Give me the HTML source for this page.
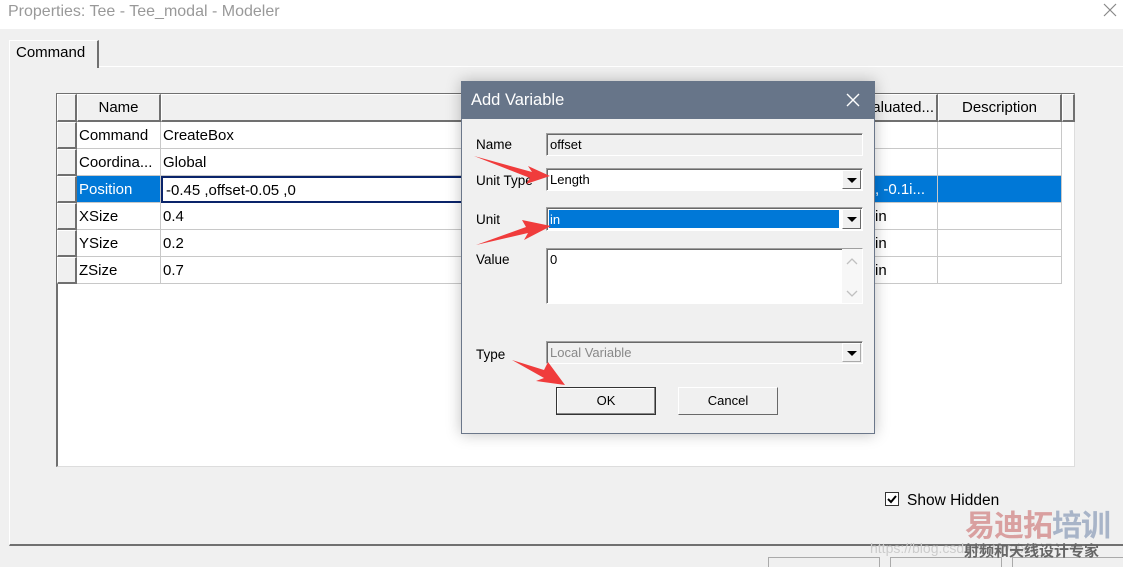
<!DOCTYPE html>
<html><head><meta charset="utf-8"><style>
*{box-sizing:border-box;margin:0;padding:0}
body{width:1123px;height:565px;overflow:hidden;background:#f0f0f0;font-family:"Liberation Sans","Noto Sans CJK SC",sans-serif;position:relative}
.a{position:absolute}
.t{font-size:15px;color:#000;white-space:nowrap}
.cell{position:absolute;border-right:1px solid #c8c8c8;border-bottom:1px solid #c8c8c8;background:#fff;font-size:15px;padding-left:2px;line-height:28px;white-space:nowrap;overflow:hidden}
.rh{position:absolute;background:#f0f0f0;border-right:2px solid #707070;border-bottom:2px solid #707070;border-left:1px solid #fff;border-top:1px solid #fff}
.hd{position:absolute;background:#f0f0f0;border-right:2px solid #707070;border-bottom:2px solid #707070;border-top:1px solid #fff;border-left:1px solid #fff;font-size:15px;text-align:center;line-height:26px}
.lb{position:absolute;font-size:13.5px;color:#000;font-family:"Liberation Sans",sans-serif}
.fld{position:absolute;border:1px solid;border-color:#a0a0a0 #fff #fff #a0a0a0;box-shadow:inset 1px 1px 0 #696969;font-size:13px;padding-left:3px;line-height:21px}
.dd{position:absolute;right:1px;top:1px;width:19px;bottom:1px;background:#f0f0f0;border-right:1px solid #696969;border-bottom:1px solid #696969;border-top:1px solid #fff;border-left:1px solid #fff}
.dd:after{content:"";position:absolute;left:4px;top:7px;border-left:5px solid transparent;border-right:5px solid transparent;border-top:5px solid #000}
.btn{position:absolute;background:#f0f0f0;border:1px solid;border-color:#fff #696969 #696969 #fff;font-size:13px;text-align:center;line-height:26px}
</style></head><body>
<div class="a" style="left:0;top:0;width:1123px;height:29px;background:#fff"></div>
<div class="a t" style="left:8px;top:3px;font-size:16px;color:#999">Properties: Tee - Tee_modal - Modeler</div>
<svg class="a" style="left:1103px;top:3px" width="14" height="14"><path d="M1 1L13 13M13 1L1 13" stroke="#888" stroke-width="1.2"/></svg>
<div class="a" style="left:9px;top:66px;width:1120px;height:480px;border-left:1px solid #fff;border-top:1px solid #fff;border-bottom:2px solid #707070"></div>
<div class="a" style="left:9px;top:40px;width:90px;height:28px;background:#f0f0f0;border-left:1px solid #fff;border-top:1px solid #fff;border-right:2px solid #707070"></div>
<div class="a t" style="left:16px;top:44px">Command</div>
<div class="a" style="left:56px;top:93px;width:1019px;height:374px;background:#fff;border-left:2px solid #707070;border-top:2px solid #707070;border-bottom:1px solid #ddd;border-right:1px solid #ddd"></div>
<div class="hd" style="left:57px;top:94px;width:20px;height:28px"></div>
<div class="hd" style="left:77px;top:94px;width:84px;height:28px">Name</div>
<div class="hd" style="left:161px;top:94px;width:700px;height:28px"></div>
<div class="hd" style="left:861px;top:94px;width:77px;height:28px;text-align:right;padding-right:2px">aluated...</div>
<div class="hd" style="left:938px;top:94px;width:124px;height:28px">Description</div>
<div class="hd" style="left:1062px;top:94px;width:13px;height:28px"></div>
<div class="rh" style="left:57px;top:122px;width:20px;height:27px"></div>
<div class="rh" style="left:57px;top:149px;width:20px;height:27px"></div>
<div class="rh" style="left:57px;top:176px;width:20px;height:27px"></div>
<div class="rh" style="left:57px;top:203px;width:20px;height:27px"></div>
<div class="rh" style="left:57px;top:230px;width:20px;height:27px"></div>
<div class="rh" style="left:57px;top:257px;width:20px;height:27px"></div>

<div class="cell" style="left:77px;top:122px;width:84px;height:27px">Command</div>
<div class="cell" style="left:161px;top:122px;width:700px;height:27px">CreateBox</div>
<div class="cell" style="left:861px;top:122px;width:77px;height:27px"></div>
<div class="cell" style="left:938px;top:122px;width:124px;height:27px"></div>
<div class="cell" style="left:77px;top:149px;width:84px;height:27px">Coordina...</div>
<div class="cell" style="left:161px;top:149px;width:700px;height:27px">Global</div>
<div class="cell" style="left:861px;top:149px;width:77px;height:27px"></div>
<div class="cell" style="left:938px;top:149px;width:124px;height:27px"></div>
<div class="cell" style="left:77px;top:176px;width:84px;height:27px;background:#0078d7;color:#fff">Position</div>
<div class="cell" style="left:161px;top:176px;width:700px;height:27px;border:2px solid #0a246a;line-height:25px;padding-left:3px">-0.45 ,offset-0.05 ,0</div>
<div class="cell" style="left:861px;top:176px;width:77px;height:27px;background:#0078d7;color:#fff;padding-left:14px">, -0.1i...</div>
<div class="cell" style="left:938px;top:176px;width:124px;height:27px;background:#0078d7"></div>
<div class="cell" style="left:77px;top:203px;width:84px;height:27px">XSize</div>
<div class="cell" style="left:161px;top:203px;width:700px;height:27px">0.4</div>
<div class="cell" style="left:861px;top:203px;width:77px;height:27px;padding-left:14px">in</div>
<div class="cell" style="left:938px;top:203px;width:124px;height:27px"></div>
<div class="cell" style="left:77px;top:230px;width:84px;height:27px">YSize</div>
<div class="cell" style="left:161px;top:230px;width:700px;height:27px">0.2</div>
<div class="cell" style="left:861px;top:230px;width:77px;height:27px;padding-left:14px">in</div>
<div class="cell" style="left:938px;top:230px;width:124px;height:27px"></div>
<div class="cell" style="left:77px;top:257px;width:84px;height:27px">ZSize</div>
<div class="cell" style="left:161px;top:257px;width:700px;height:27px">0.7</div>
<div class="cell" style="left:861px;top:257px;width:77px;height:27px;padding-left:14px">in</div>
<div class="cell" style="left:938px;top:257px;width:124px;height:27px"></div>

<div class="a" style="left:885px;top:492px;width:14px;height:14px;background:#fff;border:1px solid #333"></div>
<svg class="a" style="left:886px;top:493px" width="12" height="12"><path d="M2 6L5 9L10 3" stroke="#000" stroke-width="2" fill="none"/></svg>
<div class="a t" style="left:907px;top:492px;font-size:15.5px">Show Hidden</div>
<div class="a" style="left:768px;top:557px;width:112px;height:10px;border:1px solid #aaa;border-bottom:none;background:#f0f0f0"></div>
<div class="a" style="left:890px;top:557px;width:112px;height:10px;border:1px solid #aaa;border-bottom:none;background:#f0f0f0"></div>
<div class="a" style="left:1012px;top:557px;width:112px;height:10px;border:1px solid #aaa;border-bottom:none;background:#f0f0f0"></div>
<div class="a" style="left:965px;top:505px;font-size:30px;font-weight:bold;color:#d9a0a0;font-family:'Noto Sans CJK SC',sans-serif;line-height:36px;letter-spacing:-1px">易迪拓<span style="color:#a8b4c8">培训</span></div>
<div class="a" style="left:870px;top:540px;font-size:14px;color:#ccc">https://blog.csdn.net/weixin_</div>
<div class="a" style="left:964px;top:540px;font-size:15px;font-weight:bold;color:#666;font-family:'Noto Sans CJK SC',sans-serif">射频和天线设计专家</div>

<div class="a" style="left:461px;top:81px;width:414px;height:353px;background:#f0f0f0;border:1px solid #6b778a;box-shadow:0 0 14px rgba(0,0,0,.25)"></div>
<div class="a" style="left:461px;top:81px;width:414px;height:38px;background:#677589"></div>
<div class="a" style="left:471px;top:91px;font-size:16.5px;color:#fff">Add Variable</div>
<svg class="a" style="left:846px;top:93px" width="14" height="14"><path d="M1 1L13 13M13 1L1 13" stroke="#fff" stroke-width="1.4"/></svg>
<div class="lb" style="left:476px;top:137px">Name</div>
<div class="lb" style="left:476px;top:173px">Unit Type</div>
<div class="lb" style="left:476px;top:212px">Unit</div>
<div class="lb" style="left:476px;top:252px">Value</div>
<div class="lb" style="left:476px;top:347px">Type</div>
<div class="fld" style="left:546px;top:133px;width:317px;height:23px;background:#f0f0f0">offset</div>
<div class="fld" style="left:546px;top:168px;width:317px;height:23px;background:#fff">Length<div class="dd"></div></div>
<div class="fld" style="left:546px;top:207px;width:317px;height:24px;background:#fff"><div class="a" style="left:2px;top:2px;right:23px;bottom:2px;background:#0078d7;color:#fff;line-height:19px;padding-left:1px">in</div><div class="dd"></div></div>
<div class="fld" style="left:546px;top:248px;width:317px;height:56px;background:#fff;line-height:22px">0<div class="a" style="right:0;top:0;width:20px;bottom:0;background:#f7f7f7"></div>
<svg class="a" style="right:4px;top:8px" width="12" height="40"><path d="M1 7L6 2L11 7M1 34L6 39L11 34" stroke="#c0c0c0" fill="none" stroke-width="1.3"/></svg></div>
<div class="fld" style="left:546px;top:341px;width:317px;height:23px;background:#f0f0f0;color:#888">Local Variable<div class="dd" style="border-color:#fff #aaa #aaa #fff"></div></div>
<div class="btn" style="left:556px;top:387px;width:100px;height:28px;border:1px solid #333;box-shadow:inset -1px -1px 0 #888,inset 1px 1px 0 #fff">OK</div>
<div class="btn" style="left:678px;top:387px;width:100px;height:28px">Cancel</div>
<svg class="a" style="left:470px;top:150px" width="100" height="240">
<path d="M4 6L62 22L58 16L80 26L56 34L60 28Z" fill="#f03c3c"/>
<path d="M6 95L58 83L54 90L81 76L52 70L56 77Z" fill="#f03c3c"/>
<path d="M42 210L74 228L66 231L95 235L78 212L74 220Z" fill="#f03c3c"/>
</svg>
</body></html>
